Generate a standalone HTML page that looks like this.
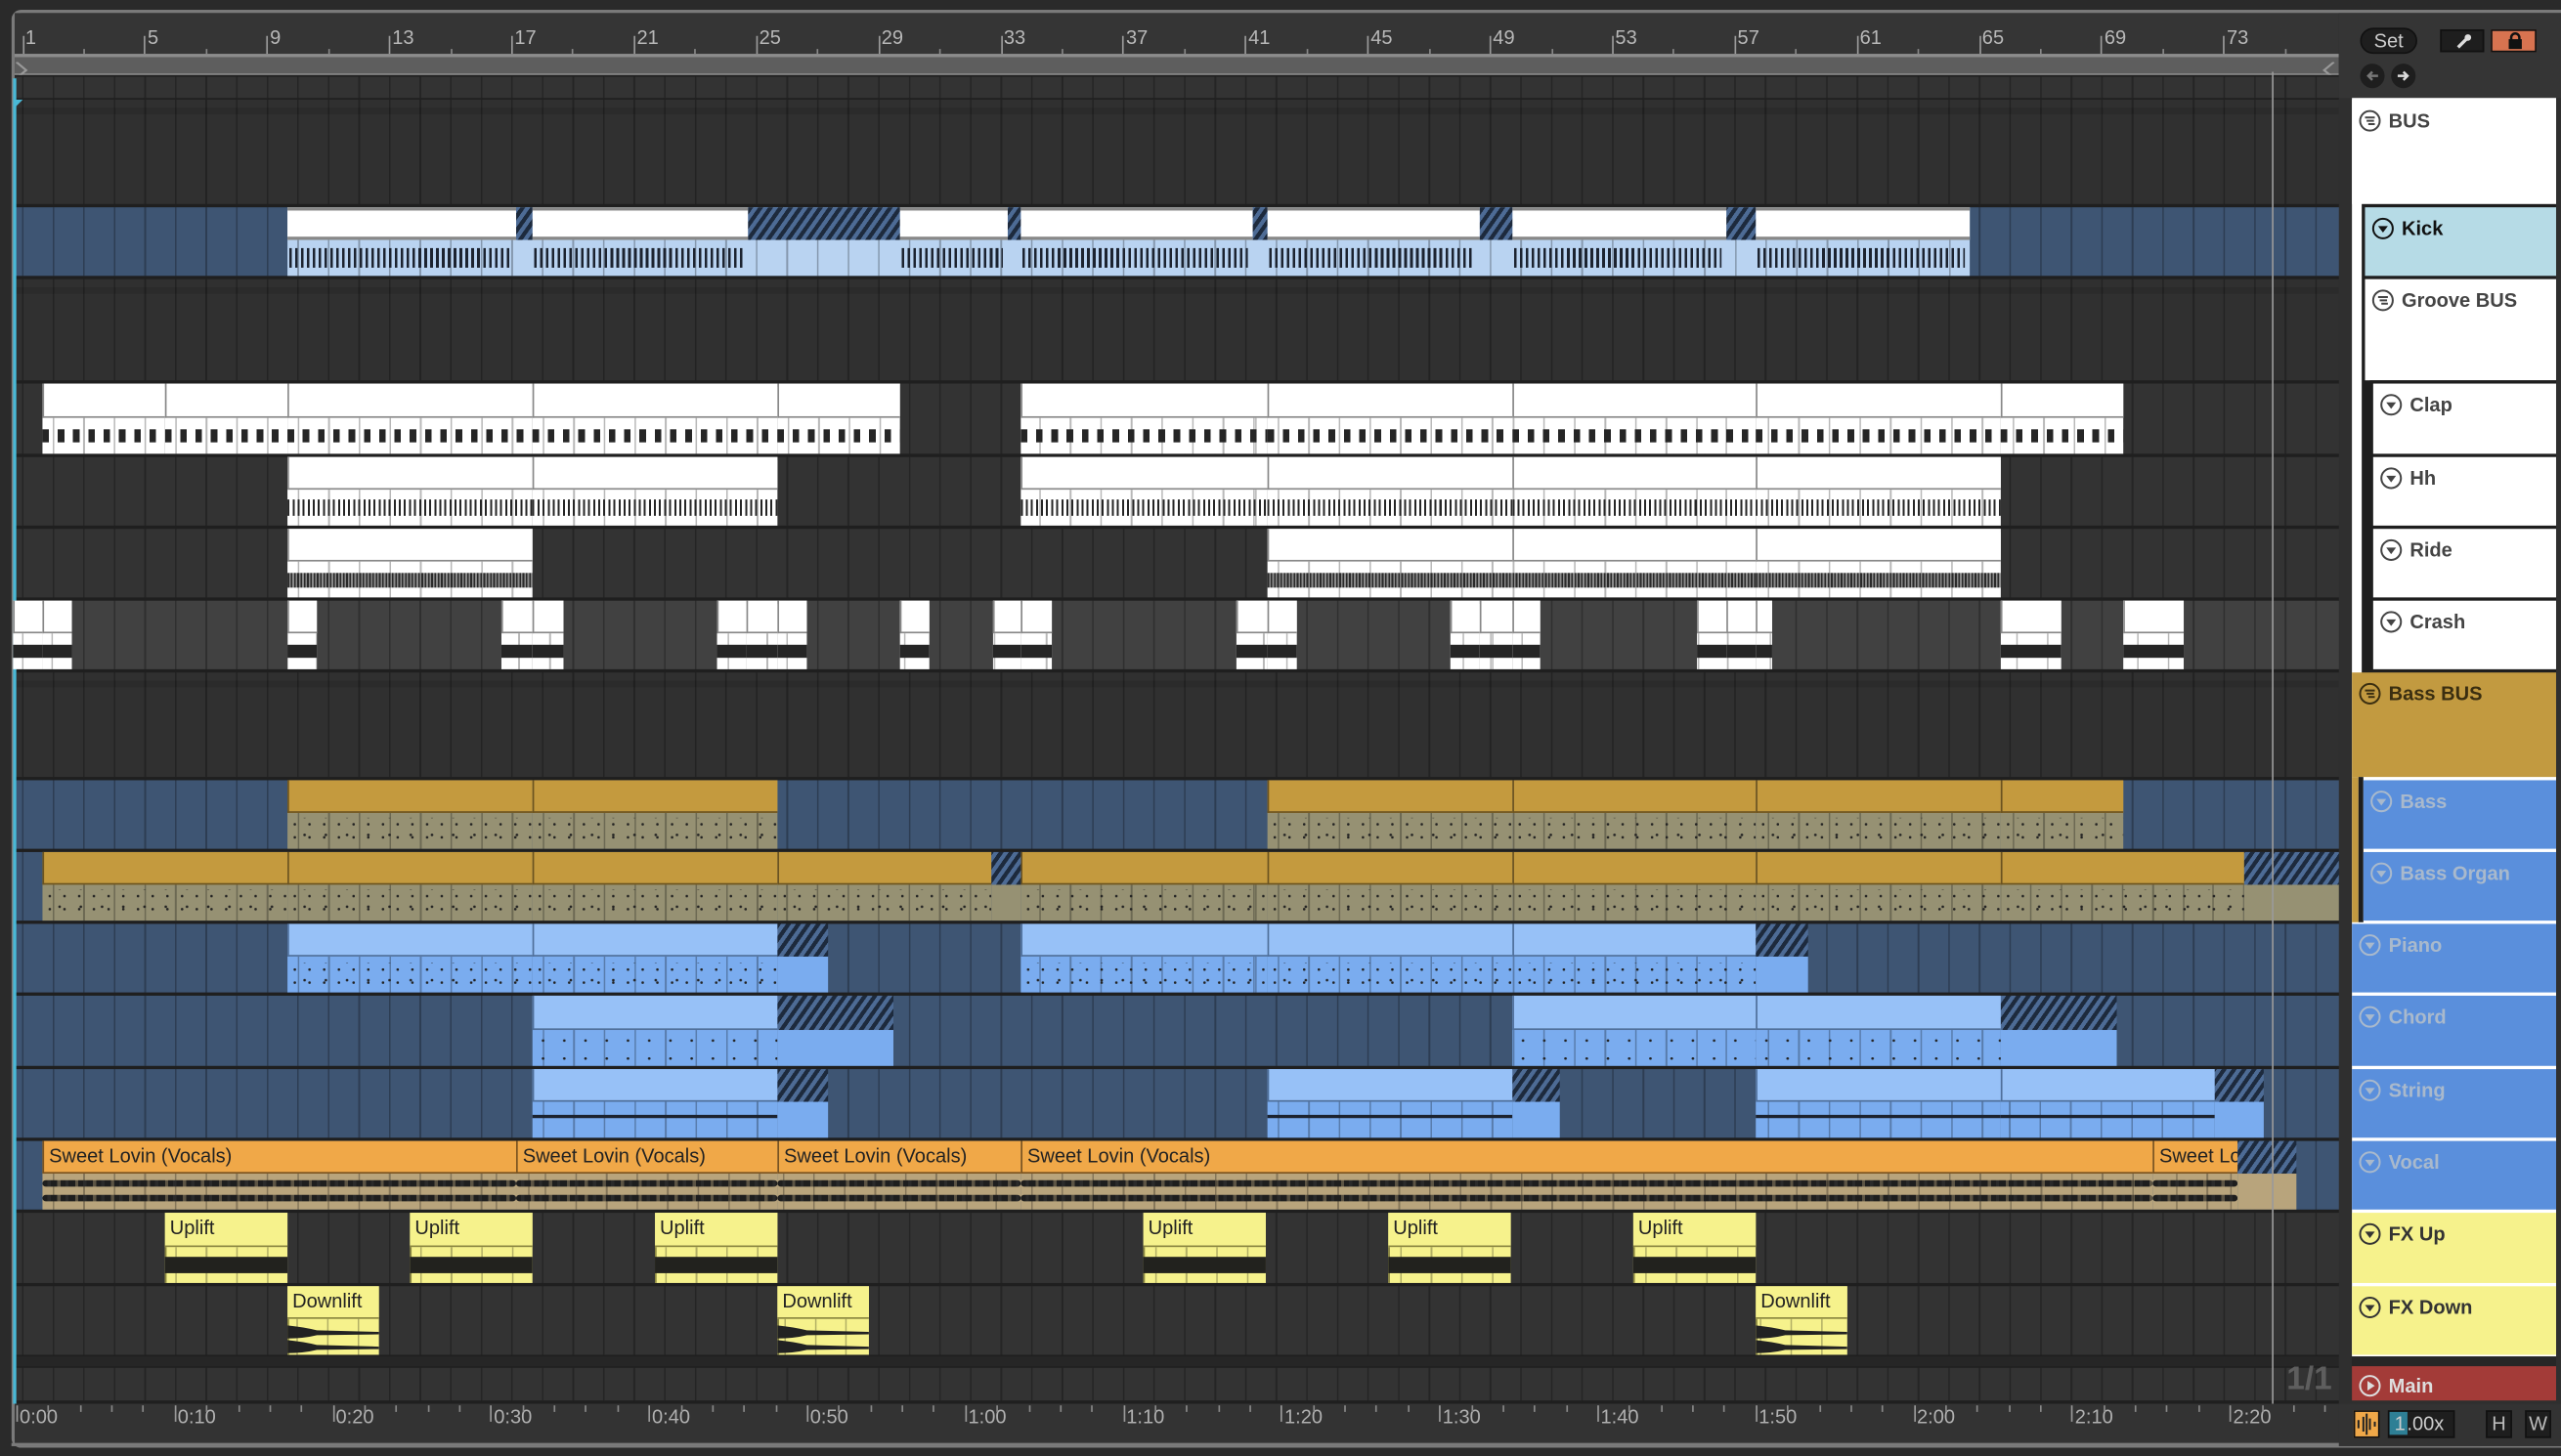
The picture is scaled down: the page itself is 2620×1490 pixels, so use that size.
<!DOCTYPE html>
<html><head><meta charset="utf-8">
<style>
html,body{margin:0;padding:0;width:2620px;height:1490px;overflow:hidden;background:#2a2a2a;font-family:"Liberation Sans",sans-serif;}
#s{position:absolute;left:0;top:0;width:1568px;height:892px;transform:scale(1.67092,1.67040);transform-origin:0 0;background:#2a2a2a;}
#s div{box-sizing:border-box;}
.lbl{font-size:12px;color:#222;white-space:nowrap;overflow:hidden;padding:2px 0 0 3px;line-height:14px;}
.th{font-weight:bold;font-size:12px;white-space:nowrap;}
</style></head><body>
<div id="s"></div>
<script>
const S=document.getElementById('s');
function d(x,y,w,h,st,html){const e=document.createElement('div');e.style.cssText='position:absolute;left:'+x+'px;top:'+y+'px;width:'+w+'px;height:'+h+'px;'+(st||'');if(html!==undefined)e.innerHTML=html;S.appendChild(e);return e;}
const BAR=18.72, X0=13.5;
d(7,6,1563,881,'border:2px solid #7a7a7a;border-right:none;border-radius:6px 0 0 6px;background:#333;');
d(9,8,1423,26,'background:#353535;');
for(let b=1;b<=75;b++){const x=X0+(b-1)*BAR;
 if((b-1)%4==0){d(x,22,1,12,'background:#9a9a9a;');d(x+2,16,30,16,'font-size:12px;color:#b8b8b8;',''+b);}
 else if((b-1)%2==0){d(x,30,1,4,'background:#888;');}
}
d(9,33,1423,13,'background:#5e5e5e;border-top:2px solid #8c8c8c;border-bottom:1px solid #8c8c8c;');
d(9,35,10,10,'','<svg width="10" height="10"><path d="M1 0 L7 5 L1 10" fill="none" stroke="#999" stroke-width="1.3"/></svg>');
d(1420,35,10,10,'','<svg width="10" height="10"><path d="M9 0 L3 5 L9 10" fill="none" stroke="#999" stroke-width="1.3"/></svg>');
d(9,46,1431,814,'background:#1f1f1f;');
const rows=[[46,60,'#333'],[60,125,'#303030'],[126,169,'#3e5573'],[170,233,'#303030'],[234,278,'#333'],[279,322,'#333'],[323,366,'#333'],[367,410,'#414141'],[411,476,'#303030'],[477,520,'#3e5573'],[521,564,'#3e5573'],[565,608,'#3e5573'],[609,653,'#3e5573'],[654,697,'#3e5573'],[698,741,'#3e5573'],[742,786,'#333'],[787,830,'#333'],[837,858,'#333']];
const grid='repeating-linear-gradient(to right,rgba(0,0,0,.28) 0 1px,transparent 1px '+BAR+'px)';
rows.forEach(r=>{d(9,r[0]+1,1431,r[1]-r[0]-1,'background:'+grid+','+r[2]+';background-position:'+(X0-9)+'px 0,0 0;');});
[[60,125],[170,233],[411,476]].forEach(r=>{d(9,r[0]+6,1423,4,'background:rgba(0,0,0,.1);');});
d(9,831,1431,6,'background:#262626;');
d(8,48,2,812,'background:#49b9d6;');
d(8,54,6,6,'','<svg width="6" height="6"><path d="M0 0 L6 0 L0 6Z" fill="#49b9d6"/></svg>');
const hatch='repeating-linear-gradient(-55deg,#1d2a3d 0 2.5px,#4d6b95 2.5px 5px)';
function clip(r,x1,x2,hc,body,label,o){o=o||{};const top=r[0]+1,h=r[1]-r[0]-1,hh=Math.round(h*0.48);
 d(x1,top,x2-x1,h,'background:'+body+';overflow:hidden;'+(o.bord||''));
 d(x1,top+hh,x2-x1,h-hh,'background:'+grid+';background-position:'+(X0-x1)+'px 0;');
 if(o.pat)d(x1,top+hh+Math.round((h-hh)*o.pat[0]),x2-x1,Math.round((h-hh)*o.pat[1]),o.pat[2]);
 if(hc)d(x1,top,x2-x1,hh,'background:'+hc+';border-bottom:1px solid '+(o.hb||'#888')+';'+(o.sep?'border-left:1px solid '+o.hb+';':''),label?'<div class="lbl">'+label+'</div>':'');
}
function hat(r,x1,x2){const top=r[0]+1,h=r[1]-r[0]-1,hh=Math.round(h*0.48);d(x1,top,x2-x1,hh,'background:'+hatch+';');}
const R={};['top','bus','kick','groove','clap','hh','ride','crash','bbus','bass','organ','piano','chord','string','vocal','fxup','fxdown','main'].forEach((k,i)=>R[k]=rows[i]);
// Kick
clip(R.kick,176,1206,null,'#b9d3f1','');
const kseg=[[176,316],[326,458],[551,617],[625,767],[776,906],[926,1057],[1075,1206]];
kseg.forEach(s=>{const r=R.kick;d(s[0],r[0]+1,s[1]-s[0],20,'background:#fff;border-top:2px solid #888;border-bottom:2px solid #888;');
 d(s[0]+1,r[0]+26,s[1]-s[0]-4,12,'background:repeating-linear-gradient(to right,#1c2330 0 1.6px,transparent 1.6px 3.6px);');});
[[316,326],[458,551],[617,625],[767,776],[906,926],[1057,1075]].forEach(s=>hat(R.kick,s[0],s[1]));
function wclip(r,segs,pat){segs.forEach(s=>{clip(r,s[0],s[1],'#fff','#fff','',{hb:'#888',sep:1,pat:pat,bord:'border-top:2px solid #888;'});});}
wclip(R.clap,[[26,101],[101,176],[176,326],[326,476],[476,551],[625,776],[776,926],[926,1075],[1075,1225],[1225,1300]],[0.3,0.35,'background:repeating-linear-gradient(to right,#252525 0 4px,transparent 4px 9.36px);']);
wclip(R.hh,[[176,326],[326,476],[625,776],[776,926],[926,1075],[1075,1225]],[0.25,0.45,'background:repeating-linear-gradient(to right,#252525 0 1.2px,transparent 1.2px 3.1px);']);
wclip(R.ride,[[176,326],[776,926],[926,1075],[1075,1225]],[0.3,0.4,'background:repeating-linear-gradient(to right,#2a2a2a 0 1px,#8a8a8a 1px 2px);']);
wclip(R.crash,[[8,26],[26,44],[176,194],[307,326],[326,345],[439,457],[457,476],[476,494],[551,569],[608,625],[625,644],[757,776],[776,794],[888,906],[906,926],[926,943],[1039,1057],[1057,1075],[1075,1085],[1225,1262],[1300,1337]],[0.32,0.38,'background:#252525;']);
const dots='radial-gradient(circle,#222 0 0.7px,transparent 0.9px) 0 0/9px 8px,radial-gradient(circle,#222 0 0.7px,transparent 0.9px) 4px 5px/13px 11px';
function bclip(r,segs,hc,hb,body,pat){segs.forEach(s=>clip(r,s[0],s[1],hc,body,'',{hb:hb,sep:1,pat:pat}));}
bclip(R.bass,[[176,326],[326,476],[776,926],[926,1075],[1075,1225],[1225,1300]],'#c49a3e','#6b5320','#969173',[0.15,0.75,'background:'+dots+';']);
bclip(R.organ,[[26,176],[176,326],[326,476],[476,607],[625,776],[776,926],[926,1075],[1075,1225],[1225,1374]],'#c49a3e','#6b5320','#969173',[0.15,0.75,'background:'+dots+';']);
d(607,R.organ[0]+21,18,22,'background:#969173;');hat(R.organ,607,625);
d(1374,R.organ[0]+21,66,22,'background:#969173;');hat(R.organ,1374,1440);
bclip(R.piano,[[176,326],[326,476],[625,776],[776,926],[926,1075]],'#97c1f7','#4f6f9a','#7aacef',[0.2,0.6,'background:'+dots+';']);
d(476,R.piano[0]+21,31,22,'background:#7aacef;');hat(R.piano,476,507);
d(1075,R.piano[0]+21,32,22,'background:#7aacef;');hat(R.piano,1075,1107);
bclip(R.chord,[[326,476],[926,1075],[1075,1225]],'#97c1f7','#4f6f9a','#7aacef',[0.05,0.9,'background:radial-gradient(circle,#222 0 0.7px,transparent 0.9px) 0 0/13px 11px;']);
d(476,R.chord[0]+21,71,23,'background:#7aacef;');hat(R.chord,476,547);
d(1225,R.chord[0]+21,71,23,'background:#7aacef;');hat(R.chord,1225,1296);
bclip(R.string,[[326,476],[776,926],[1075,1225],[1225,1356]],'#97c1f7','#4f6f9a','#7aacef',[0.38,0.09,'background:#1c2330;']);
d(476,R.string[0]+21,31,22,'background:#7aacef;');hat(R.string,476,507);
d(926,R.string[0]+21,29,22,'background:#7aacef;');hat(R.string,926,955);
d(1356,R.string[0]+21,30,22,'background:#7aacef;');hat(R.string,1356,1386);
const wave='repeating-linear-gradient(to right,#1e1e1e 0 3px,#2a2a2a 3px 5px,#1e1e1e 5px 9px,rgba(30,30,30,.6) 9px 11px)';
[[26,316],[316,476],[476,625],[625,1318],[1318,1370]].forEach(s=>{const r=R.vocal;clip(r,s[0],s[1],'#f0a848','#b8a47c','Sweet Lovin (Vocals)',{hb:'#7a5320',sep:1});
 d(s[0],r[0]+25,s[1]-s[0],4,'background:'+wave+';border-radius:2px;');d(s[0],r[0]+34,s[1]-s[0],4,'background:'+wave+';border-radius:2px;');});
d(1370,R.vocal[0]+21,36,22,'background:#b8a47c;');hat(R.vocal,1370,1406);
[101,251,401,700,850,1000].forEach(x=>clip(R.fxup,x,x+75,'#f6f28c','#f6f28c','Uplift',{hb:'#8a8640',pat:[0.25,0.45,'background:#22221e;'],bord:'border-left:1px solid #8a8640;'}));
[176,476,1075].forEach(x=>{clip(R.fxdown,x,x+56,'#f6f28c','#f6f28c','Downlift',{hb:'#8a8640',bord:'border-left:1px solid #8a8640;'});
 d(x,R.fxdown[0]+22,56,21,'','<svg width="56" height="21"><path d="M0 3 Q10 4 18 6 L56 7 L56 8.5 L18 9 Q10 11 0 11Z M0 12 Q10 13 18 15 L56 16 L56 17.5 L18 18 Q10 20 0 20Z" fill="#222"/></svg>');});
d(1391,44,1,816,'background:#9a9a9a;');
d(1400,834,40,24,'font-size:20px;font-weight:bold;color:#5e5e5e;','1/1');
d(9,860,1431,26,'background:#333;');
for(let i=0;i<=14;i++){const x=10+i*96.8;d(x,861,1,10,'background:#999;');d(x+2,861,40,16,'font-size:12px;color:#b0b0b0;',(Math.floor(i/6))+':'+((i%6)+'0'));
 for(let k=1;k<5;k++){const xx=x+k*19.36;if(xx<1432)d(xx,861,1,4,'background:#888;');}}
d(7,884,1563,2,'background:#7a7a7a;');
d(1432,8,136,852,'background:#2f2f2f;');
d(1432,8,136,52,'background:#353535;');
d(1445,17,35,16,'background:#1e1e1e;border:1px solid #111;border-radius:8px;color:#ccc;font-size:12px;text-align:center;line-height:14px;','Set');
d(1494,18,27,14,'background:#1e1e1e;border:1px solid #111;','<svg width="27" height="14"><path d="M10 10 L16 4" stroke="#ddd" stroke-width="2"/><circle cx="16" cy="4" r="2" fill="#ddd"/></svg>');
d(1525,18,28,14,'background:#d87350;border:1px solid #111;','<svg width="28" height="14"><rect x="10" y="5" width="8" height="6" fill="#111"/><path d="M11.5 6 V4 A2.5 2.5 0 0 1 16.5 4 V6" fill="none" stroke="#111" stroke-width="1.5"/></svg>');
d(1445,39,15,15,'background:#1e1e1e;border-radius:50%;','<svg width="15" height="15"><path d="M11 7.5 H5 M7.5 5 L5 7.5 L7.5 10" stroke="#777" stroke-width="1.5" fill="none"/></svg>');
d(1464,39,15,15,'background:#1e1e1e;border-radius:50%;','<svg width="15" height="15"><path d="M4 7.5 H10 M7.5 5 L10 7.5 L7.5 10" stroke="#ddd" stroke-width="1.5" fill="none"/></svg>');
function ico(type,col){if(type=='g')return '<svg width="14" height="14" style="vertical-align:-3px"><circle cx="7" cy="7" r="6" fill="none" stroke="'+col+'" stroke-width="1.2"/><path d="M4 5H10M5 7H9.5M6 9H10" stroke="'+col+'" stroke-width="1.2"/></svg>';
 if(type=='p')return '<svg width="14" height="14" style="vertical-align:-3px"><circle cx="7" cy="7" r="6" fill="none" stroke="'+col+'" stroke-width="1.2"/><path d="M5.5 4L10 7L5.5 10Z" fill="'+col+'"/></svg>';
 return '<svg width="14" height="14" style="vertical-align:-3px"><circle cx="7" cy="7" r="6" fill="none" stroke="'+col+'" stroke-width="1.2"/><path d="M4 5.5H10L7 9.5Z" fill="'+col+'"/></svg>';}
function th(x,r,bg,name,t,tc,ic){d(x,r[0]+1,1565-x,r[1]-r[0]-1,'background:'+bg+';');d(x+4,r[0]+5,1565-x-4,16,'color:'+tc+';',ico(t,ic||tc)+' <span class="th">'+name+'</span>');}
d(1440,60,125,771,'background:#fff;');
th(1440,R.bus,'#fff','BUS','g','#444');
d(1446,125,119,306,'background:#1e1e1e;');
th(1448,R.kick,'#b6dbe6','Kick','t','#111');
th(1448,R.groove,'#fff','Groove BUS','g','#444');
d(1451,233,114,178,'background:#1e1e1e;');
th(1453,R.clap,'#fff','Clap','t','#444');
th(1453,R.hh,'#fff','Hh','t','#444');
th(1453,R.ride,'#fff','Ride','t','#444');
th(1453,R.crash,'#fff','Crash','t','#444');
th(1440,R.bbus,'#c29a40','Bass BUS','g','#3a2e10');
d(1440,476,4,89,'background:#c29a40;');d(1444,476,3,89,'background:#1e1e1e;');
th(1447,R.bass,'#5a8fdc','Bass','t','#a9b9cc');
th(1447,R.organ,'#5a8fdc','Bass Organ','t','#a9b9cc');
th(1440,R.piano,'#5a8fdc','Piano','t','#a9b9cc');
th(1440,R.chord,'#5a8fdc','Chord','t','#a9b9cc');
th(1440,R.string,'#5a8fdc','String','t','#a9b9cc');
th(1440,R.vocal,'#5a8fdc','Vocal','t','#a9b9cc');
th(1440,R.fxup,'#f6f28c','FX Up','t','#333');
th(1440,R.fxdown,'#f6f28c','FX Down','t','#333');
d(1440,831,125,6,'background:#262626;');
d(1440,R.main[0],125,21,'background:#a33b38;');
d(1444,R.main[0]+3,120,16,'color:#ddd;',ico('p','#ddd')+' <span class="th">Main</span>');
d(1432,860,136,26,'background:#333;');
d(1441,864,16,17,'background:#f0a848;border:1px solid #111;','<svg width="14" height="15"><path d="M2 5V10M5 3V12M7 1V14M9 4V11M12 6V9" stroke="#222" stroke-width="1.2"/></svg>');
d(1462,864,41,17,'background:#1e1e1e;border:1px solid #111;color:#ccc;font-size:12px;line-height:15px;','<span style="background:#2e7f95;padding:0 1px 0 3px;">1</span>.00x');
d(1522,864,16,17,'background:#1e1e1e;border:1px solid #111;color:#bbb;font-size:12px;text-align:center;line-height:15px;','H');
d(1546,864,16,17,'background:#1e1e1e;border:1px solid #111;color:#bbb;font-size:12px;text-align:center;line-height:15px;','W');
</script>
</body></html>
